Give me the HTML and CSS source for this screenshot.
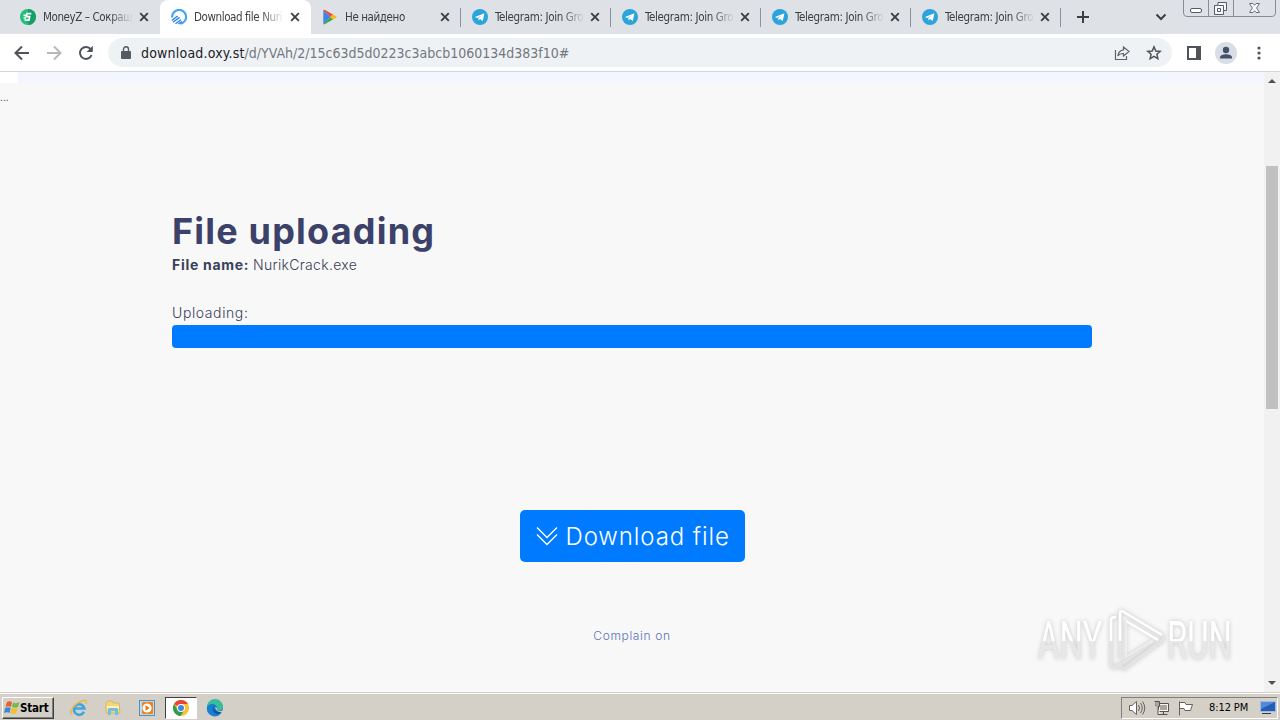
FILE: index.html
```html
<!DOCTYPE html>
<html lang="en">

<head>
    <meta charset="UTF-8">
    <meta name="viewport" content="width=device-width, initial-scale=1.0">
    <title>Download file NurikCrack.exe</title>
    <link rel="stylesheet" href="styles.css">
</head>

<body>
    <svg class="defs" width="0" height="0">
        <symbol id="close" viewBox="0 0 10 10">
            <path d="M1.2 1.2L8.8 8.8M8.8 1.2L1.2 8.8" fill="none" stroke="#3c4043" stroke-width="1.9" />
        </symbol>
        <symbol id="telegram" viewBox="0 0 16 16">
            <circle cx="8" cy="8" r="8" fill="#2ba3db" />
            <path d="M3 8L12.4 4.3L10.8 12L8 10L6.6 11.4L6.2 9L10.4 5.9L5.2 8.9Z" fill="#fff" />
        </symbol>
    </svg>

    <div class="tabs">
        <div class="tab first">
            <svg class="favicon" viewBox="0 0 16 16">
                <circle cx="8" cy="8" r="8" fill="#1fc078" />
                <path d="M8 0A8 8 0 0 1 8 16Z" fill="#179f69" />
                <path d="M11.3 4.6H7L6.3 7.7H9.6L9 11.2H4.5M3.5 6.3H6M3.6 9H5.8" fill="none" stroke="#fff" stroke-width="1.7" />
            </svg>
            <span class="title money">MoneyZ – Сокращ</span>
            <svg class="close"><use href="#close" /></svg>
        </div>
        <div class="tab active">
            <svg class="favicon" viewBox="0 0 16 16">
                <path d="M1.1 8.5A7 7 0 1 1 9.3 14.8" fill="none" stroke="#3fa3f6" stroke-width="2.1" />
                <path d="M.8 11.5L6.7 7M2 13.2L8.6 8.4M4.5 14.7L10 10.7M7.3 15L11 12.6" fill="none" stroke="#2c82ee" stroke-width="1.4" />
            </svg>
            <span class="title download">Download file Nuri</span>
            <svg class="close"><use href="#close" /></svg>
        </div>
        <div class="tab line">
            <svg class="favicon" viewBox="0 0 16 16">
                <path d="M1.3 1V15L8.4 8Z" fill="#3f83e4" />
                <path d="M1.3 1Q2.2.3 3.1 1L11 5.5L8.4 8Z" fill="#e84c40" />
                <path d="M1.3 15Q2.2 15.8 3.1 15L11 10.5L8.4 8Z" fill="#36a853" />
                <path d="M11 5.5L14.4 7.4Q15.2 8 14.4 8.6L11 10.5L8.4 8Z" fill="#fbbc10" />
            </svg>
            <span class="title missing">Не найдено</span>
            <svg class="close"><use href="#close" /></svg>
        </div>
        <div class="tab line">
            <svg class="favicon"><use href="#telegram" /></svg>
            <span class="title telegram">Telegram: Join Gro</span>
            <svg class="close"><use href="#close" /></svg>
        </div>
        <div class="tab line">
            <svg class="favicon"><use href="#telegram" /></svg>
            <span class="title telegram">Telegram: Join Gro</span>
            <svg class="close"><use href="#close" /></svg>
        </div>
        <div class="tab line">
            <svg class="favicon"><use href="#telegram" /></svg>
            <span class="title telegram">Telegram: Join Gro</span>
            <svg class="close"><use href="#close" /></svg>
        </div>
        <div class="tab line">
            <svg class="favicon"><use href="#telegram" /></svg>
            <span class="title telegram">Telegram: Join Gro</span>
            <svg class="close"><use href="#close" /></svg>
        </div>
        <div class="newtab">
            <svg width="12" height="12"><path d="M6 0V12M0 6H12" stroke="#3c4043" stroke-width="2" /></svg>
        </div>
        <svg class="chevron" width="12" height="8"><path d="M1.5 1.5L6 6L10.5 1.5" fill="none" stroke="#3c4043" stroke-width="2" /></svg>
        <svg class="window" width="94" height="18" fill="none">
            <path d="M.5 0V13Q.5 16.5 4 16.5H89Q92.5 16.5 92.5 13V0M25.5 0V16M50.5 0V16" stroke="#898c96" />
            <rect x="7.5" y="8.5" width="11" height="4" rx="1.5" fill="#fff" stroke="#555b68" />
            <path d="M35 2.5H43.5V10.5H40.5V14.5H31.5V5.5H35Z" fill="#f8f8fa" stroke="#555b68" />
            <path d="M35.5 5.5H40.5V10.5M34.5 8.5H37.5V11.5H34.5Z" stroke="#555b68" />
            <path d="M66.5 3.5H70L71.5 5.3L73 3.5H76.5L73.6 8L76.5 12.5H73L71.5 10.7L70 12.5H66.5L69.4 8Z" fill="#f8f8fa" stroke="#6c717d" />
        </svg>
    </div>

    <div class="toolbar">
        <svg class="nav" viewBox="0 0 16 16"><path d="M15 8H2M8 1.5L1.5 8L8 14.5" stroke="#505459" stroke-width="2" /></svg>
        <svg class="nav" viewBox="0 0 16 16"><path d="M1 8H14M8 1.5L14.5 8L8 14.5" stroke="#b6b8bc" stroke-width="2" /></svg>
        <svg class="nav" viewBox="0 0 16 16"><path d="M13.6 10A6 6 0 1 1 12.8 4.3" stroke="#505459" stroke-width="2" /><path d="M14.8 .8V7H8.6Z" fill="#505459" /></svg>
        <div class="address">
            <svg class="lock" width="10" height="13"><rect y="5" width="10" height="8" rx="1" fill="#555a60" /><path d="M2.5 5V3.3A2.5 2.5 0 0 1 7.5 3.3V5" fill="none" stroke="#555a60" stroke-width="1.4" /></svg>
            <span class="url"><b>download.oxy.st</b>/d/YVAh/2/15c63d5d0223c3abcb1060134d383f10#</span>
            <svg class="share" width="16" height="16" fill="none" stroke="#5f6368" stroke-width="1.2"><path d="M1.5 5V14.5H12.5V11" /><path d="M9.5 2L15 6.5L9.5 11V8.5Q5.5 8.5 3.8 11Q4.5 5.5 9.5 4.8Z" /></svg>
            <svg class="star" width="16" height="16" fill="none" stroke="#505459" stroke-width="1.5"><path d="M8 1.9L9.8 6L14.2 6.4L10.9 9.3L11.9 13.7L8 11.4L4.1 13.7L5.1 9.3L1.8 6.4L6.2 6Z" /></svg>
        </div>
        <svg class="panel" width="14" height="14"><rect x="1" y="1" width="12" height="12" fill="#fff" stroke="#505459" stroke-width="2" /><path d="M9 1H14V13H9Z" fill="#505459" /></svg>
        <svg class="avatar" width="22" height="22"><circle cx="11" cy="11" r="11" fill="#d8dee6" /><circle cx="11" cy="8" r="3.2" fill="#46506b" /><path d="M5 16.5V15Q6 12.2 11 12.2T17 15V16.5Z" fill="#46506b" /></svg>
        <svg class="dots" width="4" height="14" fill="#505459"><circle cx="2" cy="2" r="1.6" /><circle cx="2" cy="7" r="1.6" /><circle cx="2" cy="12" r="1.6" /></svg>
    </div>

    <div class="view">
        <div class="page">
            <div class="banner"></div>
            <p class="ellipsis">...</p>
            <div class="content">
                <h1>File uploading</h1>
                <p class="filename"><b>File name:</b> <span>NurikCrack.exe</span></p>
                <p class="label">Uploading:</p>
                <div class="progress"></div>
                <a class="button">
                    <svg width="22" height="20" fill="none" stroke="#fff" stroke-width="1.3"><path d="M1 1.5L11 11.5L21 1.5M1 8.5L11 18.5L21 8.5" /></svg>
                    <span>Download file</span>
                </a>
                <a class="complain">Complain on</a>
            </div>
            <div class="watermark">
                <span class="any">ANY</span>
                <svg width="60" height="66" fill="none">
                    <path d="M13 51V5Q13 2 16 3.5L55 27Q58 30 55 33L17 61L12 58L46 33" stroke="#e4e4e4" stroke-width="3" />
                    <path d="M9 9Q4 8 4 13V56Q4 61 9 59L14 55" stroke="#e4e4e4" stroke-width="3" />
                    <path d="M13 33V5Q13 2 16 3.5L55 27M19 13L51 32M4 33V12Q4 9 9 9" stroke="#fff" stroke-width="2.5" />
                    <path d="M19 13V49L46 32" stroke="#eee" stroke-width="2" />
                </svg>
                <span class="run">RUN</span>
            </div>
        </div>
        <div class="scrollbar">
            <svg width="8" height="4"><path d="M0 4L4 0L8 4Z" fill="#505050" /></svg>
            <div class="thumb"></div>
            <svg width="8" height="4"><path d="M0 0L4 4L8 0Z" fill="#505050" /></svg>
        </div>
    </div>

    <div class="taskbar">
        <div class="start">
            <svg width="16" height="16"><path d="M3 2Q6 .5 8 2L7 7Q4 5.5 1.5 7Z" fill="#e7602d" /><path d="M9 2.5Q12 4 15.5 2L14 7Q11 8.5 8 7Z" fill="#76b947" /><path d="M1.2 8Q4 6.5 6.7 8L5.5 13Q3 11.5 0 13Z" fill="#348bd2" /><path d="M7.7 8Q11 9.5 13.7 8L12.4 13Q9.5 15 6.5 13Z" fill="#f5bd30" /></svg>
            <span>Start</span>
        </div>
        <div class="app">
            <svg width="18" height="18" fill="none"><path d="M14 12.8A5.3 5.3 0 1 1 14.4 9.5H5" stroke="#3ba6e2" stroke-width="2.6" /><path d="M2.5 15.5C-2 15 3 5 12 2Q18 0 16 5" stroke="#e9b93b" stroke-width="1.4" /></svg>
        </div>
        <div class="app">
            <svg width="18" height="18"><path d="M2 4L4 2H8L9 4H15L16 14H2Z" fill="#f4d77c" stroke="#d3b764" /><path d="M3 7H15V10H3Z" fill="#fff1b5" /><path d="M4 16V10Q4 9 5 9H13Q14 9 14 10V16H11V12H7V16Z" fill="#73bddd" /></svg>
        </div>
        <div class="app">
            <svg width="18" height="18"><rect x="1.5" y="1.5" width="15" height="15" fill="#bcd9ee" stroke="#568fbd" /><rect x="4" y="3" width="11" height="12" rx="1" fill="#f08417" /><circle cx="9" cy="9" r="4.6" fill="#fff" /><path d="M7.5 6.3L11.8 9L7.5 11.7Z" fill="#ed7912" /></svg>
        </div>
        <div class="app pressed">
            <svg width="16" height="16"><circle cx="8" cy="8" r="8" fill="#f9c22e" /><path d="M8 8L1.1 4A8 8 0 0 1 14.9 4H8Z" fill="#e84335" /><path d="M1.1 4A8 8 0 0 0 7.5 16L11.4 10L8 8L4.6 10Z" fill="#2e9d50" /><circle cx="8" cy="8" r="4" fill="#fff" /><circle cx="8" cy="8" r="3" fill="#4184ee" /></svg>
        </div>
        <div class="app">
            <svg width="18" height="18"><circle cx="9" cy="9" r="8" fill="#1474c5" /><path d="M1 8A8 8 0 0 1 17 8Q17 12 12 12Q9 11 11 9Q10 5 6 5Q3 5 1 8Z" fill="#38bd9e" /><path d="M1 8Q4 4 8 7Q5 9 7 13Q9 16 14 15.5A8 8 0 0 1 1 8Z" fill="#1680d4" /><path d="M8 8Q7 14 16 12L13 15Q8 15 7 11Z" fill="#174e99" /><path d="M9 8Q12 9 10.5 11Q13 13 17 11.5V13Q10 14 9 8Z" fill="#d4d0c8" /></svg>
        </div>
        <div class="tray">
            <svg width="18" height="16" fill="#fff" stroke="#68645d"><path d="M1.5 5.5H4L8.5 1.5V14.5L4 10.5H1.5Z" /><path d="M10.5 5Q12.5 8 10.5 11M12.5 3Q16 8 12.5 13M14.5 1.5Q19 8 14.5 14.5" fill="none" /></svg>
            <svg width="17" height="16" fill="#f7f5f0" stroke="#55524d"><path d="M5.5 3.5H15.5V11.5H5.5ZM7.5 14.5H14.5M10.5 12V14" /><path d="M7 5H14V10H7Z" fill="#aaa69f" stroke="none" /><path d="M1.5 1.5H6.5V6.5H5V14.5H8M3 6.5V1.5M5 6.5V1.5" /></svg>
            <svg width="17" height="16" fill="#fff" stroke="#68645d"><path d="M2.5 1.5V15.5M2.5 2.5H8L9 4.5H15.5L13.5 10.5H8L7 8.5H2.5Z" /></svg>
            <span class="clock">8:12 PM</span>
            <svg class="desktop" width="16" height="13"><rect width="16" height="11" fill="#9bbbe5" /><rect x="1" y="1" width="14" height="9" fill="#255db4" /><path d="M1 1H15L1 8Z" fill="#508bd5" /><path d="M2 12.5H11" stroke="#2e3644" /></svg>
        </div>
    </div>
</body>

</html>
```
FILE: styles.css
```css
* {
    box-sizing: border-box;
}

body {
    display: flex;
    flex-direction: column;
    width: 1280px;
    height: 720px;
    margin: 0;
    overflow: hidden;
    background-color: #f8f8f8;
    font-family: "DejaVu Sans Condensed", "DejaVu Sans", sans-serif;
    font-size: 11px;
}

svg {
    display: block;
    flex: none;
}

p, h1 {
    margin: 0;
}

.defs {
    display: none;
}

.tabs {
    display: flex;
    height: 34px;
    padding-left: 9px;
    background-color: #dee1e6;
}

.tab {
    display: flex;
    align-items: center;
    flex: none;
    width: 150px;
    padding: 0 11px;
    color: #3c4043;
}

.tab.first, .tab.active {
    width: 151px;
}

.tab.active {
    background-color: #fff;
    border-radius: 8px 8px 0 0;
}

.tab.line {
    background: linear-gradient(#8d9098, #8d9098) 149px 8px / 1px 19px no-repeat;
}

.favicon {
    width: 16px;
    height: 16px;
}

.title {
    width: 90px;
    margin-left: 7px;
    white-space: nowrap;
    font-size: 11.5px;
    line-height: 18px;
    -webkit-mask-image: linear-gradient(to right, #000 66px, transparent 90px);
    mask-image: linear-gradient(to right, #000 66px, transparent 90px);
}

.close {
    width: 10px;
    height: 10px;
    margin-left: 6px;
}

.title.money, .title.download, .title.missing {
    letter-spacing: -0.4px;
}

.title.telegram {
    letter-spacing: -0.35px;
}

.newtab {
    padding: 11px 0 0 16px;
}

.chevron {
    margin: 13px 16px 0 auto;
}

.window {
    margin-right: 3px;
}

.toolbar {
    display: flex;
    align-items: center;
    height: 38px;
    padding-left: 14px;
    background-color: #fff;
    border-bottom: 1px solid #d4d8dc;
}

.nav {
    width: 16px;
    height: 16px;
    margin-right: 16px;
    fill: none;
}

.address {
    display: flex;
    align-items: center;
    width: 1064px;
    height: 29px;
    margin-left: -2px;
    padding: 0 10px 0 13px;
    border-radius: 15px;
    background-color: #eff2f5;
}

.url {
    margin-left: 10px;
    color: #73787e;
    font-size: 14px;
    line-height: 20px;
}

.url b {
    color: #202124;
    font-weight: normal;
    letter-spacing: 0.2px;
}

.share {
    margin-left: auto;
}

.star {
    margin-left: 16px;
}

.panel {
    margin-left: 15px;
}

.avatar {
    margin-left: 14px;
}

.dots {
    margin-left: 20px;
}

.view {
    display: flex;
    height: 620px;
}

.page {
    position: relative;
    width: 1264px;
    background-color: #f8f8f8;
    font-family: Inter, sans-serif;
}

.banner {
    height: 11px;
    margin-left: 18px;
    background-color: #f3f6fe;
    box-shadow: -18px 0 #fff;
}

.ellipsis {
    color: #41455b;
    font-size: 10px;
    line-height: 28px;
}

.content {
    display: flex;
    flex-direction: column;
    width: 920px;
    margin: 98px auto 0;
    color: #3a405a;
}

h1 {
    color: #3b4168;
    font-size: 36px;
    font-weight: 700;
    line-height: 44px;
    letter-spacing: 1.2px;
}

.filename, .label {
    font-size: 14px;
    line-height: 24px;
    white-space: nowrap;
}

.filename b {
    letter-spacing: 0.7px;
}

.filename span {
    font-weight: 300;
    letter-spacing: 0.3px;
}

.label {
    margin-top: 24px;
    font-weight: 300;
    letter-spacing: 0.6px;
}

.progress {
    height: 23px;
    border-radius: 4px;
    background-color: #007bff;
}

.button {
    display: flex;
    align-items: center;
    align-self: center;
    width: 225px;
    height: 52px;
    margin-top: 162px;
    padding-left: 16px;
    border-radius: 5px;
    background-color: #007bff;
    color: #fff;
    font-size: 24px;
    font-weight: 300;
    white-space: nowrap;
}

.button span {
    margin-left: 8px;
    letter-spacing: 0.9px;
}

.complain {
    align-self: center;
    margin-top: 64px;
    color: #5a72bb;
    font-size: 12px;
    font-weight: 300;
    line-height: 20px;
    letter-spacing: 0.65px;
}

/* overlaid on the corner of the page */
.watermark {
    position: absolute;
    right: 30px;
    bottom: 18px;
    display: flex;
    align-items: center;
    width: 196px;
    filter: drop-shadow(0 0 2px #c4c4c4);
}

.watermark span {
    flex: none;
    width: 108px;
    margin-right: -39px;
    font-family: Roboto, sans-serif;
    font-size: 53px;
    line-height: 60px;
    background: linear-gradient(#fff 50%, #e8e8e8 50%);
    -webkit-background-clip: text;
    background-clip: text;
    color: transparent;
    transform: scaleX(0.62);
    transform-origin: left;
}

.scrollbar {
    display: flex;
    flex-direction: column;
    align-items: center;
    width: 16px;
    padding: 7px 0;
    background-color: #f1f1f1;
}

.thumb {
    width: 12px;
    height: 243px;
    margin: 83px 0 auto;
    background-color: #c1c1c1;
}

.taskbar {
    display: flex;
    align-items: center;
    height: 28px;
    padding: 2px 2px 0;
    background-color: #d4d0c8;
    border-top: 1px solid #d4d0c8;
    box-shadow: inset 0 1px #fff;
}

.start {
    display: flex;
    align-items: center;
    width: 52px;
    height: 22px;
    margin-right: 9px;
    padding-left: 1px;
    border: 1px solid;
    border-color: #fff #404040 #404040 #fff;
    box-shadow: inset -1px -1px #808080;
    color: #000;
    font-size: 11.5px;
    font-weight: bold;
    letter-spacing: -0.2px;
}

.app {
    display: flex;
    justify-content: center;
    align-items: center;
    width: 32px;
    height: 22px;
    margin-right: 2px;
}

.app.pressed {
    border: 1px solid;
    border-color: #404040 #fff #fff #404040;
    background-color: #fff;
}

.tray {
    display: flex;
    align-items: center;
    width: 157px;
    height: 22px;
    margin-left: auto;
    padding-left: 6px;
    border: 1px solid;
    border-color: #808080 #fff #fff #808080;
    gap: 7px;
}

.clock {
    width: 44px;
    margin-left: 8px;
    color: #000;
    letter-spacing: -0.1px;
    white-space: nowrap;
}
```
